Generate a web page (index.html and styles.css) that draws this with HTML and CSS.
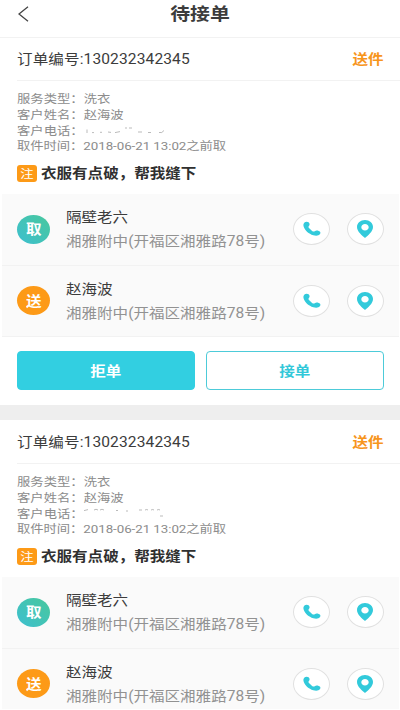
FILE: index.html
```html
<!DOCTYPE html>
<html lang="zh-CN">
<head>
<meta charset="utf-8">
<title>待接单</title>
<link rel="stylesheet" href="styles.css">
</head>
<body>
<svg class="defs" aria-hidden="true">
  <symbol id="phone" viewBox="0 0 18 16">
    <path d="M1.2 1.7C2.4.4 4.6.3 5.6 1.3C6.9 2.5 7 4 5.7 5.2C5.2 5.8 5.5 6.6 6.5 7.6L9.1 9.9C10 10.6 11 10.8 11.7 10.3C13 9.4 14.2 9.5 15.7 10C17.6 10.7 17.8 11.9 17 13C15.8 14.8 13 15.1 10.3 14.2C5.7 12.7 2 9.4.8 5.9C.2 4.2.3 2.8 1.2 1.7Z"/>
  </symbol>
  <symbol id="pin" viewBox="0 0 16 18">
    <path fill-rule="evenodd" d="M8 0C12.5 0 16 3.1 16 7C16 11.5 10.7 15.8 8 18C5.3 15.8 0 11.5 0 7C0 3.1 3.5 0 8 0ZM8 4C5.9 4 4.3 5.4 4.3 7.2S5.9 10.4 8 10.4S11.7 9 11.7 7.2S10.1 4 8 4Z"/>
  </symbol>
</svg>
<header class="topbar">
  <svg class="back" viewBox="0 0 11 16"><path d="M10 .8L1 8L10 15.2"/></svg>
  <h1 class="title wide">待接单</h1>
</header>
<main>
  <section class="card">
    <div class="order"><span class="number wide">订单编号:130232342345</span><b class="tag wide">送件</b></div>
    <div class="details">
      <p><span class="wide">服务类型：洗衣</span></p>
      <p><span class="wide">客户姓名：赵海波</span></p>
      <p><span class="wide">客户电话：</span><svg class="masked" viewBox="0 0 84 12"><path d="M3 4.5V8M8 7.6h2M16 7.3h2M24 7l3 .4M31 7.6l5-1M41 3h2m2 0h3M54 7h4M64 7.5h3M75 7.5q3 1 5-2"/></svg></p>
      <p><span class="time wide">取件时间：2018-06-21 13:02之前取</span></p>
      <div class="note"><i class="badge"><span class="wide">注</span></i><b class="wide">衣服有点破，帮我缝下</b></div>
    </div>
    <div class="stops">
      <div class="stop">
        <i class="dot pickup"><span class="wide">取</span></i>
        <div class="place"><span class="name wide">隔壁老六</span><span class="addr wide">湘雅附中(开福区湘雅路78号)</span></div>
        <a class="round"><svg class="phone"><use href="#phone"/></svg></a>
        <a class="round"><svg class="pin"><use href="#pin"/></svg></a>
      </div>
      <div class="stop">
        <i class="dot deliver"><span class="wide">送</span></i>
        <div class="place"><span class="name wide">赵海波</span><span class="addr wide">湘雅附中(开福区湘雅路78号)</span></div>
        <a class="round"><svg class="phone"><use href="#phone"/></svg></a>
        <a class="round"><svg class="pin"><use href="#pin"/></svg></a>
      </div>
    </div>
    <div class="actions">
      <button class="btn filled"><span class="wide">拒单</span></button>
      <button class="btn"><span class="wide">接单</span></button>
    </div>
  </section>
  <section class="card">
    <div class="order"><span class="number wide">订单编号:130232342345</span><b class="tag wide">送件</b></div>
    <div class="details">
      <p><span class="wide">服务类型：洗衣</span></p>
      <p><span class="wide">客户姓名：赵海波</span></p>
      <p><span class="wide">客户电话：</span><svg class="masked" viewBox="0 0 84 12"><path d="M0 2.6l4-1M10 2q2-1.5 4 0m2 0q2-1.5 4 0M32 2.5h2M42 3h2M55 2h3m3 0q2-1 3 0m3 0q2-1 3 0m3 0q2-1 3 0M76 8h3"/></svg></p>
      <p><span class="time wide">取件时间：2018-06-21 13:02之前取</span></p>
      <div class="note"><i class="badge"><span class="wide">注</span></i><b class="wide">衣服有点破，帮我缝下</b></div>
    </div>
    <div class="stops">
      <div class="stop">
        <i class="dot pickup"><span class="wide">取</span></i>
        <div class="place"><span class="name wide">隔壁老六</span><span class="addr wide">湘雅附中(开福区湘雅路78号)</span></div>
        <a class="round"><svg class="phone"><use href="#phone"/></svg></a>
        <a class="round"><svg class="pin"><use href="#pin"/></svg></a>
      </div>
      <div class="stop">
        <i class="dot deliver"><span class="wide">送</span></i>
        <div class="place"><span class="name wide">赵海波</span><span class="addr wide">湘雅附中(开福区湘雅路78号)</span></div>
        <a class="round"><svg class="phone"><use href="#phone"/></svg></a>
        <a class="round"><svg class="pin"><use href="#pin"/></svg></a>
      </div>
    </div>
  </section>
</main>
</body>
</html>
```
FILE: styles.css
```css
* { box-sizing: border-box; }
html, body { height: 710px; overflow: hidden; }
body {
  margin: 0;
  display: flex;
  flex-direction: column;
  background: #fff;
  color: #3c3c3c;
  font: 13.75px/20px Roboto, "Noto Sans CJK SC", sans-serif;
}
i { font-style: normal; }
p, h1 { margin: 0; }
.defs { display: none; }

/* Glyphs are drawn wider than tall */
.wide {
  display: inline-block;
  white-space: nowrap;
  transform: scaleX(1.13);
  transform-origin: left center;
}

.topbar {
  flex: none;
  height: 37px;
  display: grid;
  grid-template-columns: 60px 1fr 60px;
  align-items: center;
  padding-bottom: 8px;
}
.back {
  width: 11px;
  height: 16px;
  margin-left: 18px;
  margin-bottom: 1px;
  fill: none;
  stroke: #444;
  stroke-width: 1.3;
}
.title {
  font-size: 17.6px;
  line-height: 25px;
  font-weight: 700;
  text-align: center;
  transform-origin: center;
}

main { flex: 1; min-height: 0; overflow: hidden; border-bottom: 1px solid #fff; }
.card { border-top: 1px solid #f2f2f2; }
.card + .card { border-top-color: #fff; margin-top: 15px; box-shadow: 0 -15px 0 #eee; }

.order {
  height: 43px;
  margin-left: 17px;
  padding-right: 16px;
  display: flex;
  justify-content: space-between;
  align-items: center;
  border-bottom: 1px solid #f2f2f2;
}
.number { letter-spacing: .11px; }
.tag { color: #f7951d; transform-origin: right center; }

.details {
  height: 113px;
  padding: 11px 17px 0;
  color: #8c8c8c;
  font-size: 11.8px;
  line-height: 15.8px;
}
.details p { height: 15.8px; display: flex; align-items: center; }
.time { letter-spacing: -.05px; }
.masked {
  width: 84px;
  height: 12px;
  margin-left: 8px;
  fill: none;
  stroke: #aaa;
  stroke-width: .8;
}
.note {
  display: flex;
  align-items: center;
  gap: 4px;
  height: 17px;
  margin-top: 9.8px;
  font-size: 13.75px;
  line-height: 19px;
  color: #303030;
}
.note b { padding-top: 1px; }
.badge {
  width: 20px;
  height: 17px;
  display: grid;
  place-items: center;
  border-radius: 3px;
  background: #fd9a17;
  color: #fff;
  font-size: 11.8px;
  line-height: 17px;
}
.badge .wide { padding-top: 1px; }
.badge .wide, .dot .wide, .btn .wide { transform-origin: center; }

.stops { margin: 0 1px 0 2px; background: #fafafa; }
.stop {
  height: 71.5px;
  display: flex;
  align-items: center;
  padding: 0 15px;
  border-bottom: 1px solid #f2f2f2;
}
.dot {
  width: 33px;
  height: 29px;
  display: grid;
  place-items: center;
  border-radius: 50%;
  color: #fff;
  font-weight: 700;
}
.pickup { background: linear-gradient(45deg, #3dbfd0, #48c89c); }
.deliver { background: #fd9a17; }
.place {
  flex: 1;
  margin-left: 16px;
  display: flex;
  flex-direction: column;
  gap: 4px;
}
.addr { color: #929292; }
.round {
  width: 37px;
  height: 32px;
  display: grid;
  place-items: center;
  border: 1px solid #e0e0e0;
  border-radius: 50%;
  background: #fff;
  fill: #32cadb;
}
.round + .round { margin-left: 17px; }
.phone { width: 18px; height: 16px; }
.pin { width: 16px; height: 18px; margin-right: 1px; }

.actions {
  display: flex;
  gap: 11px;
  padding: 14px 16px 15px 16.5px;
}
.btn {
  flex: 1;
  height: 39px;
  padding: 0;
  border: 1px solid #4dcbd9;
  border-radius: 4px;
  background: #fff;
  color: #32c8d9;
  font: inherit;
  font-weight: 700;
}
.filled { background: #32cfe1; border-color: #32cfe1; color: #fff; }
```
